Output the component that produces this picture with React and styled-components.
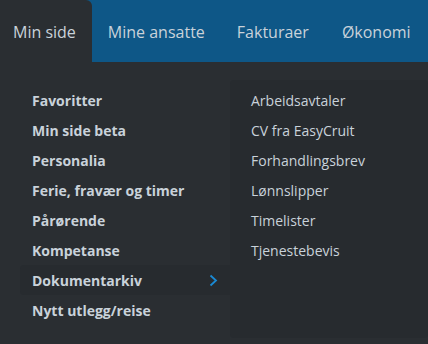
import React from 'react';
import styled, { createGlobalStyle } from 'styled-components';

const GlobalStyle = createGlobalStyle`
  html, body {
    margin: 0;
    padding: 0;
    background: #2a2e32;
  }
  body {
    font-family: "Open Sans", "Noto Sans", sans-serif;
  }
`;

const Page = styled.div`
  width: 428px;
  height: 344px;
  background: #2a2e32;
  overflow: hidden;
`;

const TopBar = styled.nav`
  display: flex;
  height: 62px;
  background: #0e5787;
`;

const Tab = styled.div`
  display: flex;
  align-items: center;
  flex-shrink: 0;
  white-space: nowrap;
  padding: 2px ${p => p.$pr || 16}px 0 ${p => p.$pl || 16}px;
  font-size: 16px;
  color: #c9d2da;
  background: ${p => (p.$active ? '#2a2e32' : 'transparent')};
  border-top-right-radius: ${p => (p.$active ? '6px' : '0')};
`;

const Body = styled.div`
  display: flex;
  padding: 18px 0 0 20px;
`;

const MainMenu = styled.ul`
  list-style: none;
  margin: 5px 0 0;
  padding: 0;
  width: 210px;
`;

const MainItem = styled.li`
  display: flex;
  align-items: center;
  justify-content: space-between;
  height: 30px;
  padding: 0 12px;
  font-size: 14px;
  font-weight: 700;
  white-space: nowrap;
  color: #c9d2da;
  background: ${p => (p.$active ? '#272b2f' : 'transparent')};
  border-radius: 4px 0 0 4px;
`;

const SubPanel = styled.div`
  flex: 1;
  height: 253px;
  background: #272b2f;
  border-radius: 4px;
  padding: 5px 0 0 21px;
`;

const SubItem = styled.div`
  display: flex;
  align-items: center;
  height: 30px;
  font-size: 14px;
  white-space: nowrap;
  color: #c9d2da;
`;

const Chevron = () => (
  <svg width="9" height="13" viewBox="0 0 9 13">
    <path d="M1.5 1.5 L7 6.5 L1.5 11.5" fill="none" stroke="#1a8ad4" strokeWidth="1.8" />
  </svg>
);

const tabs = [
  { label: 'Min side', active: true, pl: 13, pr: 16 },
  { label: 'Mine ansatte', pl: 16, pr: 16 },
  { label: 'Fakturaer', pl: 16, pr: 17 },
  { label: 'Økonomi', pl: 16, pr: 17 },
];

const mainItems = [
  'Favoritter',
  'Min side beta',
  'Personalia',
  'Ferie, fravær og timer',
  'Pårørende',
  'Kompetanse',
  'Dokumentarkiv',
  'Nytt utlegg/reise',
];

const subItems = [
  'Arbeidsavtaler',
  'CV fra EasyCruit',
  'Forhandlingsbrev',
  'Lønnslipper',
  'Timelister',
  'Tjenestebevis',
];

export default function App() {
  return (
    <Page>
      <GlobalStyle />
      <TopBar>
        {tabs.map(t => (
          <Tab key={t.label} $active={t.active} $pl={t.pl} $pr={t.pr}>
            {t.label}
          </Tab>
        ))}
      </TopBar>
      <Body>
        <MainMenu>
          {mainItems.map(item => (
            <MainItem key={item} $active={item === 'Dokumentarkiv'}>
              {item}
              {item === 'Dokumentarkiv' && <Chevron />}
            </MainItem>
          ))}
        </MainMenu>
        <SubPanel>
          {subItems.map(item => (
            <SubItem key={item}>{item}</SubItem>
          ))}
        </SubPanel>
      </Body>
    </Page>
  );
}
